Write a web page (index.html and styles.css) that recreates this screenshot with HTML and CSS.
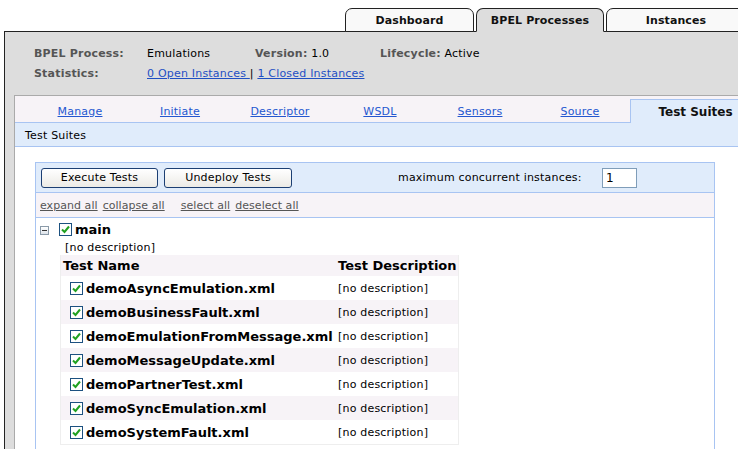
FILE: index.html
```html
<!DOCTYPE html>
<html>
<head>
<meta charset="utf-8">
<link rel="stylesheet" href="styles.css">
</head>
<body>
<div class="page">
  <div class="toptabs">
    <div class="tab">Dashboard</div>
    <div class="tab active">BPEL Processes</div>
    <div class="tab">Instances</div>
  </div>
  <div class="panel">
    <div class="info">
      <div class="row">
        <span class="lbl">BPEL Process:</span>
        <span class="val">Emulations</span>
        <span class="ver"><b>Version:</b> 1.0</span>
        <span class="life"><b>Lifecycle:</b> Active</span>
      </div>
      <div class="row">
        <span class="lbl">Statistics:</span>
        <span class="stats"><a href="#">0 Open Instances </a> | <a href="#">1 Closed Instances</a></span>
      </div>
    </div>
    <div class="inner">
      <div class="subtabs">
        <div class="stab"><a href="#">Manage</a></div>
        <div class="stab"><a href="#">Initiate</a></div>
        <div class="stab"><a href="#">Descriptor</a></div>
        <div class="stab"><a href="#">WSDL</a></div>
        <div class="stab"><a href="#">Sensors</a></div>
        <div class="stab"><a href="#">Source</a></div>
        <div class="stab current">Test Suites</div>
      </div>
      <div class="strip">Test Suites</div>
      <div class="content">
        <div class="box">
          <div class="toolbar">
            <button class="btn btn-exec">Execute Tests</button>
            <button class="btn btn-undeploy">Undeploy Tests</button>
            <span class="maxlbl">maximum concurrent instances:</span>
            <span class="input">1</span>
          </div>
          <div class="links">
            <a href="#">expand all</a>
            <a href="#">collapse all</a>
            <a href="#" class="gap">select all</a>
            <a href="#">deselect all</a>
          </div>
          <div class="tree">
            <div class="node">
              <span class="minus"></span>
              <span class="cb"><svg viewBox="0 0 11 11" width="11" height="11"><path d="M2 5.5 L4.5 8 L9 2.5" fill="none" stroke="#21a121" stroke-width="2"/></svg></span>
              <span class="nodename">main</span>
            </div>
            <div class="nodedesc">[no description]</div>
            <div class="tests">
              <div class="thead"><span class="c1">Test Name</span><span class="c2">Test Description</span></div>
              <div class="trow"><span class="c1"><span class="cb"><svg viewBox="0 0 11 11" width="11" height="11"><path d="M2 5.5 L4.5 8 L9 2.5" fill="none" stroke="#21a121" stroke-width="2"/></svg></span><span class="tname">demoAsyncEmulation.xml</span></span><span class="c2">[no description]</span></div>
              <div class="trow alt"><span class="c1"><span class="cb"><svg viewBox="0 0 11 11" width="11" height="11"><path d="M2 5.5 L4.5 8 L9 2.5" fill="none" stroke="#21a121" stroke-width="2"/></svg></span><span class="tname">demoBusinessFault.xml</span></span><span class="c2">[no description]</span></div>
              <div class="trow"><span class="c1"><span class="cb"><svg viewBox="0 0 11 11" width="11" height="11"><path d="M2 5.5 L4.5 8 L9 2.5" fill="none" stroke="#21a121" stroke-width="2"/></svg></span><span class="tname">demoEmulationFromMessage.xml</span></span><span class="c2">[no description]</span></div>
              <div class="trow alt"><span class="c1"><span class="cb"><svg viewBox="0 0 11 11" width="11" height="11"><path d="M2 5.5 L4.5 8 L9 2.5" fill="none" stroke="#21a121" stroke-width="2"/></svg></span><span class="tname">demoMessageUpdate.xml</span></span><span class="c2">[no description]</span></div>
              <div class="trow"><span class="c1"><span class="cb"><svg viewBox="0 0 11 11" width="11" height="11"><path d="M2 5.5 L4.5 8 L9 2.5" fill="none" stroke="#21a121" stroke-width="2"/></svg></span><span class="tname">demoPartnerTest.xml</span></span><span class="c2">[no description]</span></div>
              <div class="trow alt"><span class="c1"><span class="cb"><svg viewBox="0 0 11 11" width="11" height="11"><path d="M2 5.5 L4.5 8 L9 2.5" fill="none" stroke="#21a121" stroke-width="2"/></svg></span><span class="tname">demoSyncEmulation.xml</span></span><span class="c2">[no description]</span></div>
              <div class="trow"><span class="c1"><span class="cb"><svg viewBox="0 0 11 11" width="11" height="11"><path d="M2 5.5 L4.5 8 L9 2.5" fill="none" stroke="#21a121" stroke-width="2"/></svg></span><span class="tname">demoSystemFault.xml</span></span><span class="c2">[no description]</span></div>
            </div>
          </div>
        </div>
      </div>
    </div>
  </div>
</div>
</body>
</html>
```

FILE: styles.css
```css
html, body {
  margin: 0;
  padding: 0;
  background: #ffffff;
}
body {
  font-family: "DejaVu Sans", Verdana, sans-serif;
  font-size: 11px;
  letter-spacing: 0.2px;
  color: #000;
  width: 738px;
  height: 449px;
  overflow: hidden;
}
.page {
  width: 738px;
  height: 449px;
  overflow: hidden;
}
.toptabs {
  display: flex;
  gap: 2px;
  padding: 8px 0 0 345px;
  height: 23px;
  position: relative;
  z-index: 2;
}
.tab {
  box-sizing: border-box;
  width: 129px;
  height: 24px;
  border: 1px solid #222;
  border-radius: 7px 7px 0 0;
  background: #f9f9f9;
  font-weight: bold;
  letter-spacing: 0.1px;
  text-align: center;
  line-height: 24px;
  color: #111;
  flex: none;
}
.tab.active {
  width: 128px;
  background: #dddddd;
  border-bottom-color: #dddddd;
}
.tab:last-child {
  width: 140px;
}
.panel {
  margin-left: 4px;
  border-left: 1px solid #222;
  border-top: 1px solid #222;
  background: #dddddd;
  padding: 12px 0 0 9px;
  width: 800px;
  height: 500px;
}
.info {
  padding-left: 20px;
}
.row {
  display: flex;
  height: 20px;
  line-height: 20px;
  align-items: center;
}
.lbl {
  width: 113px;
  font-weight: bold;
  color: #555;
}
.val {
  width: 108px;
}
.ver {
  width: 125px;
}
.ver b, .life b {
  color: #555;
}
a {
  color: #1f4fc4;
}
.inner {
  margin-top: 11px;
  border-top: 1px solid #aaaaaa;
  border-left: 1px solid #aaaaaa;
  background: #ffffff;
  height: 400px;
}
.subtabs {
  display: flex;
  background: #f7f3f7;
  padding-left: 15px;
  border-bottom: 1px solid #a8c4f2;
  box-sizing: border-box;
  height: 27px;
}
.stab {
  width: 100px;
  flex: none;
  text-align: center;
  line-height: 31px;
  height: 26px;
}
.stab a {
  color: #2457d0;
}
.stab.current {
  width: 130px;
  margin-top: 3px;
  height: 24px;
  box-sizing: border-box;
  background: #e0ecfb;
  border: 1px solid #a8c4f2;
  border-bottom: none;
  border-right: none;
  font-weight: bold;
  line-height: 25px;
  color: #111;
  font-size: 12px;
  letter-spacing: 0;
}
.strip {
  background: #e0ecfb;
  height: 23px;
  line-height: 25px;
  padding-left: 10px;
  border-bottom: 1px solid #a8c4f2;
}
.content {
  padding: 15px 0 0 20px;
}
.box {
  width: 680px;
  box-sizing: border-box;
  border: 1px solid #a8c4f2;
  border-bottom: none;
  height: 300px;
}
.toolbar {
  background: #e0ecfb;
  height: 29px;
  border-bottom: 1px solid #a8c4f2;
  display: flex;
  align-items: center;
  padding-left: 5px;
}
.btn {
  font-family: "DejaVu Sans", Verdana, sans-serif;
  font-size: 11px;
  letter-spacing: 0.2px;
  height: 20px;
  box-sizing: border-box;
  border: 1px solid #1c3f73;
  border-radius: 3px;
  background: linear-gradient(#ffffff, #ecebe6);
  color: #000;
  padding: 0;
  margin: 0;
  flex: none;
}
.btn-exec {
  width: 117px;
}
.btn-undeploy {
  width: 128px;
  margin-left: 6px;
}
.maxlbl {
  margin-left: 106px;
  width: 204px;
}
.input {
  box-sizing: border-box;
  width: 35px;
  height: 20px;
  border: 1px solid #7f9db9;
  background: #fff;
  padding-left: 3px;
  line-height: 18px;
  font-size: 12px;
}
.links {
  background: #f7f3f7;
  height: 24px;
  border-bottom: 1px solid #a8c4f2;
  padding-left: 4px;
  line-height: 26px;
  display: flex;
  gap: 5px;
  letter-spacing: 0.05px;
}
.links a {
  color: #555;
}
.links a.gap {
  margin-left: 11px;
}
.tree {
  padding: 4px 0 0 4px;
}
.node {
  display: flex;
  align-items: center;
  height: 14px;
}
.minus {
  width: 9px;
  height: 9px;
  box-sizing: border-box;
  border: 1px solid #8a9aa8;
  background: linear-gradient(#ffffff, #dde3ea);
  position: relative;
  margin-top: 2px;
  margin-right: 10px;
}
.minus::after {
  content: "";
  position: absolute;
  left: 1px;
  top: 3px;
  width: 5px;
  height: 1px;
  background: #333;
}
.cb {
  display: inline-flex;
  width: 13px;
  height: 13px;
  box-sizing: border-box;
  border: 1px solid #1c5180;
  background: #fff;
  align-items: center;
  justify-content: center;
  flex: none;
}
.nodename {
  font-weight: bold;
  font-size: 13px;
  letter-spacing: 0;
  margin-left: 3px;
}
.nodedesc {
  margin: 4px 0 0 25px;
  height: 15px;
  line-height: 15px;
}
.tests {
  margin: 0 0 0 20px;
  width: 399px;
  box-sizing: border-box;
  border: 1px solid #eeeeee;
  border-top: none;
}
.thead {
  display: flex;
  background: #f7f3f7;
  height: 21px;
  line-height: 19px;
  align-items: center;
  font-weight: bold;
  font-size: 13px;
  letter-spacing: 0;
}
.thead .c1 {
  padding-left: 2px;
}
.thead .c2 {
  padding-left: 1px;
}
.c1 {
  width: 276px;
  box-sizing: border-box;
  flex: none;
  display: flex;
  align-items: center;
}
.c2 {
  padding-left: 1px;
}
.trow {
  display: flex;
  height: 24px;
  align-items: center;
  background: #ffffff;
}
.trow.alt {
  background: #f7f3f7;
}
.trow .c1 {
  padding-left: 9px;
}
.tname {
  font-weight: bold;
  font-size: 13px;
  letter-spacing: 0;
  margin-left: 3px;
}
```
